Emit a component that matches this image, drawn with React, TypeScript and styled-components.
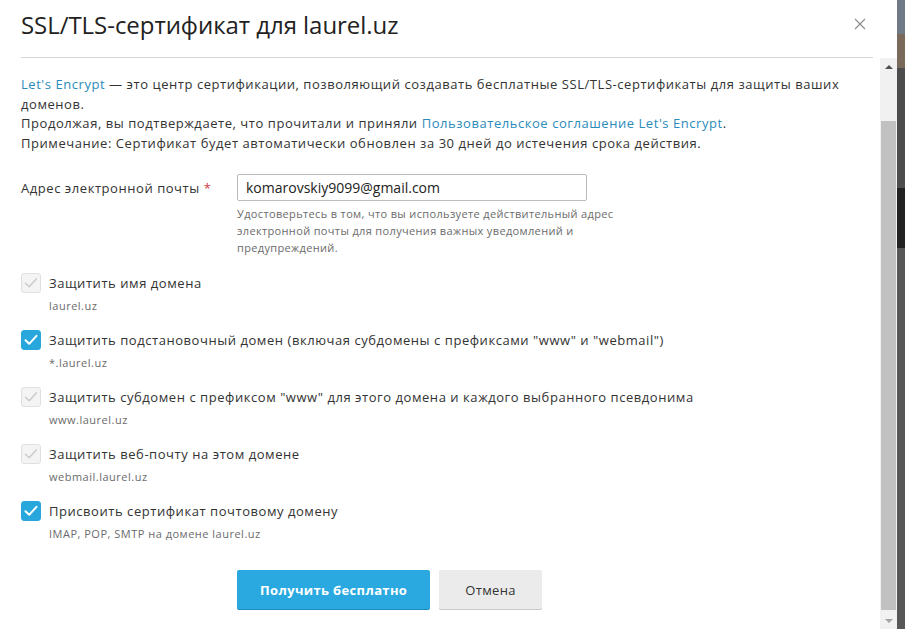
import React from "react";
import styled, { createGlobalStyle } from "styled-components";

const Global = createGlobalStyle`
  html, body { margin: 0; padding: 0; }
  body {
    background: #5b5b5b;
    font-family: "Open Sans", "Noto Sans", sans-serif;
    color: #333;
    overflow: hidden;
  }
`;

const Page = styled.div`
  display: flex;
  width: 905px;
  height: 629px;
`;

const Dialog = styled.div`
  width: 897px;
  height: 629px;
  background: #fff;
  display: flex;
  flex-direction: column;
`;

const Backdrop = styled.div`
  flex: 1;
  display: flex;
  flex-direction: column;
  background: #575757;
`;

const Band = styled.div<{ $h: number; $c: string }>`
  height: ${(p) => p.$h}px;
  background: ${(p) => p.$c};
`;

const Header = styled.div`
  height: 58px;
  margin: 0 24px 0 21px;
  border-bottom: 1px solid #d6d6d6;
  display: flex;
  align-items: center;
  justify-content: space-between;
  box-sizing: border-box;
  flex-shrink: 0;
`;

const Title = styled.h1`
  margin: 0;
  font-size: 24px;
  font-weight: 400;
  color: #222;
  letter-spacing: -0.05px;
  padding-bottom: 9px;
`;

const Close = styled.button`
  border: 0;
  background: none;
  padding: 0;
  width: 12px;
  height: 12px;
  margin-right: 7px;
  margin-bottom: 9px;
  display: flex;
  cursor: pointer;
`;

const BodyRow = styled.div`
  flex: 1;
  display: flex;
  min-height: 0;
`;

const Content = styled.div`
  flex: 1;
  padding: 17px 0 0 21px;
  overflow: hidden;
`;

const Intro = styled.p`
  margin: 0;
  font-size: 13px;
  line-height: 19.5px;
  letter-spacing: 0.55px;
  color: #333;
  max-width: 830px;
`;

const Link = styled.a`
  color: #2b8bba;
  text-decoration: none;
`;

const FieldRow = styled.div`
  display: flex;
  margin-top: 21px;
`;

const Label = styled.label`
  width: 216px;
  font-size: 13px;
  letter-spacing: 0.55px;
  padding-top: 5px;
  color: #333;
`;

const Req = styled.span`
  color: #d0393e;
`;

const FieldCol = styled.div`
  display: flex;
  flex-direction: column;
`;

const Input = styled.input`
  width: 350px;
  height: 27px;
  box-sizing: border-box;
  border: 1px solid #bcbcbc;
  border-radius: 2px;
  padding: 0 8px;
  font-family: "Open Sans", sans-serif;
  font-size: 14px;
  color: #222;
  outline: none;
`;

const Hint = styled.div`
  width: 400px;
  margin-top: 4px;
  font-size: 11px;
  line-height: 17px;
  letter-spacing: 0.35px;
  color: #6b6b6b;
`;

const Options = styled.div`
  display: flex;
  flex-direction: column;
  gap: 17px;
  margin-top: 17px;
`;

const Option = styled.div`
  display: grid;
  grid-template-columns: 20px 1fr;
  column-gap: 8px;
  row-gap: 5px;
  align-items: center;
`;

const Box = styled.span<{ $on: boolean }>`
  width: 20px;
  height: 20px;
  box-sizing: border-box;
  border-radius: 3px;
  display: flex;
  align-items: center;
  justify-content: center;
  background: ${(p) => (p.$on ? "#28a7dd" : "#f4f4f4")};
  border: 1px solid ${(p) => (p.$on ? "#28a7dd" : "#e0e0e0")};
`;

const OptLabel = styled.span`
  font-size: 13px;
  letter-spacing: 0.55px;
  color: #333;
`;

const OptSub = styled.span`
  grid-column: 2;
  font-size: 11px;
  letter-spacing: 0.5px;
  color: #6b6b6b;
`;

const Buttons = styled.div`
  display: flex;
  gap: 9px;
  margin: 29px 0 0 216px;
`;

const Btn = styled.button<{ $primary?: boolean }>`
  height: 39px;
  border: 0;
  border-radius: 2px;
  font-family: "Open Sans", sans-serif;
  font-size: 13px;
  letter-spacing: 0.35px;
  padding: 0 ${(p) => (p.$primary ? "23px" : "26px")};
  font-weight: ${(p) => (p.$primary ? 700 : 400)};
  color: ${(p) => (p.$primary ? "#fff" : "#333")};
  background: ${(p) => (p.$primary ? "#29a9df" : "#ebebeb")};
  box-shadow: 0 1px 0 ${(p) => (p.$primary ? "#1c8dbd" : "#c9c9c9")};
  cursor: pointer;
`;

const Scrollbar = styled.div`
  width: 17px;
  background: #f1f1f1;
  display: flex;
  flex-direction: column;
  align-items: center;
  box-sizing: border-box;
  padding: 0 1px;
`;

const Arrow = styled.div<{ $down?: boolean }>`
  height: 17px;
  display: flex;
  align-items: center;
  justify-content: center;
  &::after {
    content: "";
    border-left: 4px solid transparent;
    border-right: 4px solid transparent;
    ${(p) =>
      p.$down
        ? "border-top: 4px solid #a3a3a3;"
        : "border-bottom: 4px solid #505050;"}
  }
`;

const Track = styled.div`
  flex: 1;
  width: 100%;
  padding-top: 46px;
  padding-bottom: 2px;
  box-sizing: border-box;
  display: flex;
`;

const Thumb = styled.div`
  flex: 1;
  width: 100%;
  background: #c1c1c1;
`;

const Check = ({ on }: { on: boolean }) => (
  <svg width="14" height="12" viewBox="0 0 14 12">
    <path
      d="M1.5 6.2 L5.2 9.8 L12.5 1.8"
      fill="none"
      stroke={on ? "#fff" : "#c9c9c9"}
      strokeWidth={on ? 2 : 1.3}
      strokeLinecap="round"
      strokeLinejoin="round"
    />
  </svg>
);

const options = [
  { on: false, label: "Защитить имя домена", sub: "laurel.uz" },
  {
    on: true,
    label:
      'Защитить подстановочный домен (включая субдомены с префиксами "www" и "webmail")',
    sub: "*.laurel.uz",
  },
  {
    on: false,
    label:
      'Защитить субдомен с префиксом "www" для этого домена и каждого выбранного псевдонима',
    sub: "www.laurel.uz",
  },
  { on: false, label: "Защитить веб-почту на этом домене", sub: "webmail.laurel.uz" },
  {
    on: true,
    label: "Присвоить сертификат почтовому домену",
    sub: "IMAP, POP, SMTP на домене laurel.uz",
  },
];

export default function App() {
  return (
    <>
      <Global />
      <Page>
        <Dialog>
          <Header>
            <Title>SSL/TLS-сертификат для laurel.uz</Title>
            <Close aria-label="Закрыть">
              <svg width="12" height="12" viewBox="0 0 12 12">
                <path d="M1 1 L11 11 M11 1 L1 11" stroke="#8a8a8a" strokeWidth="1.1" />
              </svg>
            </Close>
          </Header>
          <BodyRow>
            <Content>
              <Intro>
                <Link href="#">Let's Encrypt</Link>
                {" — это центр сертификации, позволяющий создавать бесплатные SSL/TLS-сертификаты для защиты ваших доменов."}
                <br />
                Продолжая, вы подтверждаете, что прочитали и приняли{" "}
                <Link href="#">Пользовательское соглашение Let's Encrypt</Link>.
                <br />
                Примечание: Сертификат будет автоматически обновлен за 30 дней до
                истечения срока действия.
              </Intro>
              <FieldRow>
                <Label>
                  Адрес электронной почты <Req>*</Req>
                </Label>
                <FieldCol>
                  <Input defaultValue="komarovskiy9099@gmail.com" />
                  <Hint>
                    Удостоверьтесь в том, что вы используете действительный адрес
                    электронной почты для получения важных уведомлений и
                    предупреждений.
                  </Hint>
                </FieldCol>
              </FieldRow>
              <Options>
                {options.map((o) => (
                  <Option key={o.sub}>
                    <Box $on={o.on}>
                      <Check on={o.on} />
                    </Box>
                    <OptLabel>{o.label}</OptLabel>
                    <OptSub>{o.sub}</OptSub>
                  </Option>
                ))}
              </Options>
              <Buttons>
                <Btn $primary>Получить бесплатно</Btn>
                <Btn>Отмена</Btn>
              </Buttons>
            </Content>
            <Scrollbar>
              <Arrow />
              <Track>
                <Thumb />
              </Track>
              <Arrow $down />
            </Scrollbar>
          </BodyRow>
        </Dialog>
        <Backdrop>
          <Band $h={34} $c="#6f7a86" />
          <Band $h={34} $c="#7a6a5c" />
          <Band $h={120} $c="#4d4d4d" />
          <Band $h={60} $c="#222" />
          <Band $h={381} $c="#575757" />
        </Backdrop>
      </Page>
    </>
  );
}
